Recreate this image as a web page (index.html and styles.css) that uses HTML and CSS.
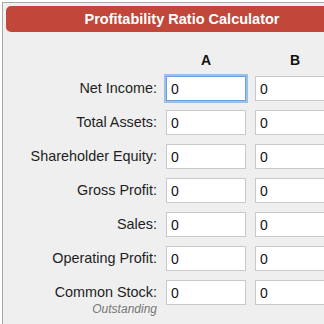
FILE: index.html
```html
<!DOCTYPE html>
<html lang="en">
<head>
    <meta charset="UTF-8">
    <meta name="viewport" content="width=device-width, initial-scale=1.0">
    <title>Profitability Ratio Calculator</title>
    <link rel="stylesheet" href="styles.css">
</head>
<body>
    <div class="calc">
        <div class="calc-title">Profitability Ratio Calculator</div>

        <div class="calc-grid">
            <div></div>
            <div class="col-head">A</div>
            <div class="col-head">B</div>

            <label class="row-label">Net Income:</label>
            <input class="num focus" type="text" value="0">
            <input class="num" type="text" value="0">

            <label class="row-label">Total Assets:</label>
            <input class="num" type="text" value="0">
            <input class="num" type="text" value="0">

            <label class="row-label">Shareholder Equity:</label>
            <input class="num" type="text" value="0">
            <input class="num" type="text" value="0">

            <label class="row-label">Gross Profit:</label>
            <input class="num" type="text" value="0">
            <input class="num" type="text" value="0">

            <label class="row-label">Sales:</label>
            <input class="num" type="text" value="0">
            <input class="num" type="text" value="0">

            <label class="row-label">Operating Profit:</label>
            <input class="num" type="text" value="0">
            <input class="num" type="text" value="0">

            <label class="row-label">Common Stock:<span class="sub">Outstanding</span></label>
            <input class="num" type="text" value="0">
            <input class="num" type="text" value="0">
        </div>
    </div>
</body>
</html>
```

FILE: styles.css
```css
* {
    margin: 0;
    padding: 0;
    box-sizing: border-box;
}

body {
    font-family: 'Liberation Sans', Arial, sans-serif;
    background: white;
    overflow: hidden;
}

.calc {
    margin: 2px 0 0 2px;
    width: 360px;
    height: 360px;
    border: 1px solid #a8a8a8;
    background: #efefef;
}

.calc-title {
    margin: 3px;
    height: 26px;
    line-height: 26px;
    border-radius: 5px;
    background: #c0473a;
    color: white;
    font-size: 14.5px;
    font-weight: bold;
    text-align: center;
}

.calc-grid {
    display: grid;
    grid-template-columns: 154px 80px 80px;
    column-gap: 9px;
    row-gap: 9px;
    margin-top: 18px;
}

.col-head {
    height: 17px;
    line-height: 20px;
    text-align: center;
    font-size: 14px;
    font-weight: bold;
    color: #111;
}

.row-label {
    font-size: 14.4px;
    line-height: 25px;
    text-align: right;
    color: #1e1e1e;
}

.row-label .sub {
    display: block;
    margin-top: -2px;
    line-height: 12px;
    font-size: 12px;
    font-style: italic;
    color: #777;
}

.num {
    align-self: start;
    width: 80px;
    height: 25px;
    padding-left: 4px;
    border: 1px solid #c9c9c9;
    background: white;
    font-family: 'Liberation Sans', Arial, sans-serif;
    font-size: 14px;
    color: #111;
}

.num.focus {
    outline: none;
    border-color: #6f9fd8;
    box-shadow: 0 0 0 2px #9cc0ea;
}
```
